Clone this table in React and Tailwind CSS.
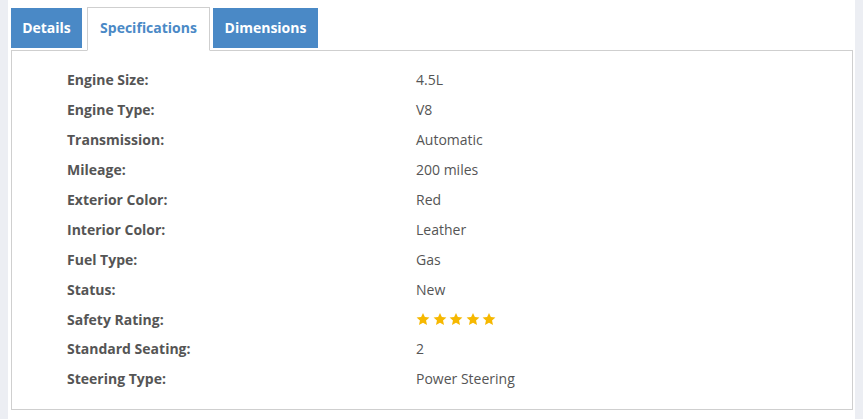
import React from "react";

const rows = [
  ["Engine Size:", "4.5L"],
  ["Engine Type:", "V8"],
  ["Transmission:", "Automatic"],
  ["Mileage:", "200 miles"],
  ["Exterior Color:", "Red"],
  ["Interior Color:", "Leather"],
  ["Fuel Type:", "Gas"],
  ["Status:", "New"],
  ["Safety Rating:", "STARS"],
  ["Standard Seating:", "2"],
  ["Steering Type:", "Power Steering"],
];

function Star() {
  return (
    <svg width="14" height="14" viewBox="0 0 24 24" className="block">
      <path
        d="M12 1.5l3.2 7.1 7.8.8-5.8 5.3 1.7 7.7L12 18.4l-6.9 4 1.7-7.7L1 9.4l7.8-.8z"
        fill="#f6b800"
      />
    </svg>
  );
}

export default function App() {
  return (
    <div
      className="flex w-[863px] h-[419px] bg-white text-[14px] text-[#555]"
      style={{ fontFamily: '"Open Sans", "Liberation Sans", sans-serif' }}
    >
      <div className="w-[8px] bg-[#eceef3] shrink-0" />
      <div className="flex-1 pl-[3px] pr-[2px]">
        <div className="flex items-start pt-[7px] h-[51px] gap-[4px]">
          <div className="mt-px h-[40px] w-[71px] bg-[#4a89c6] text-white font-bold flex items-center justify-center pb-px">
            Details
          </div>
          <div className="relative z-10 h-[44px] w-[123px] ml-px bg-white border border-[#cfcfcf] border-b-white text-[#4a89c6] font-bold flex items-center justify-center pb-[3px]">
            Specifications
          </div>
          <div className="mt-px h-[40px] w-[105px] -ml-px bg-[#4a89c6] text-white font-bold flex items-center justify-center pb-px">
            Dimensions
          </div>
        </div>
        <div className="-mt-px h-[360px] border border-[#cfcfcf] pl-[55px] pt-[14px]">
          {rows.map(([label, value]) => (
            <div key={label} className="flex h-[29.9px] items-center">
              <div className="w-[349px] font-bold">{label}</div>
              <div>
                {value === "STARS" ? (
                  <div className="flex gap-[2.5px]">
                    <Star />
                    <Star />
                    <Star />
                    <Star />
                    <Star />
                  </div>
                ) : (
                  value
                )}
              </div>
            </div>
          ))}
        </div>
      </div>
      <div className="w-[8px] bg-[#eceef3] shrink-0" />
    </div>
  );
}
